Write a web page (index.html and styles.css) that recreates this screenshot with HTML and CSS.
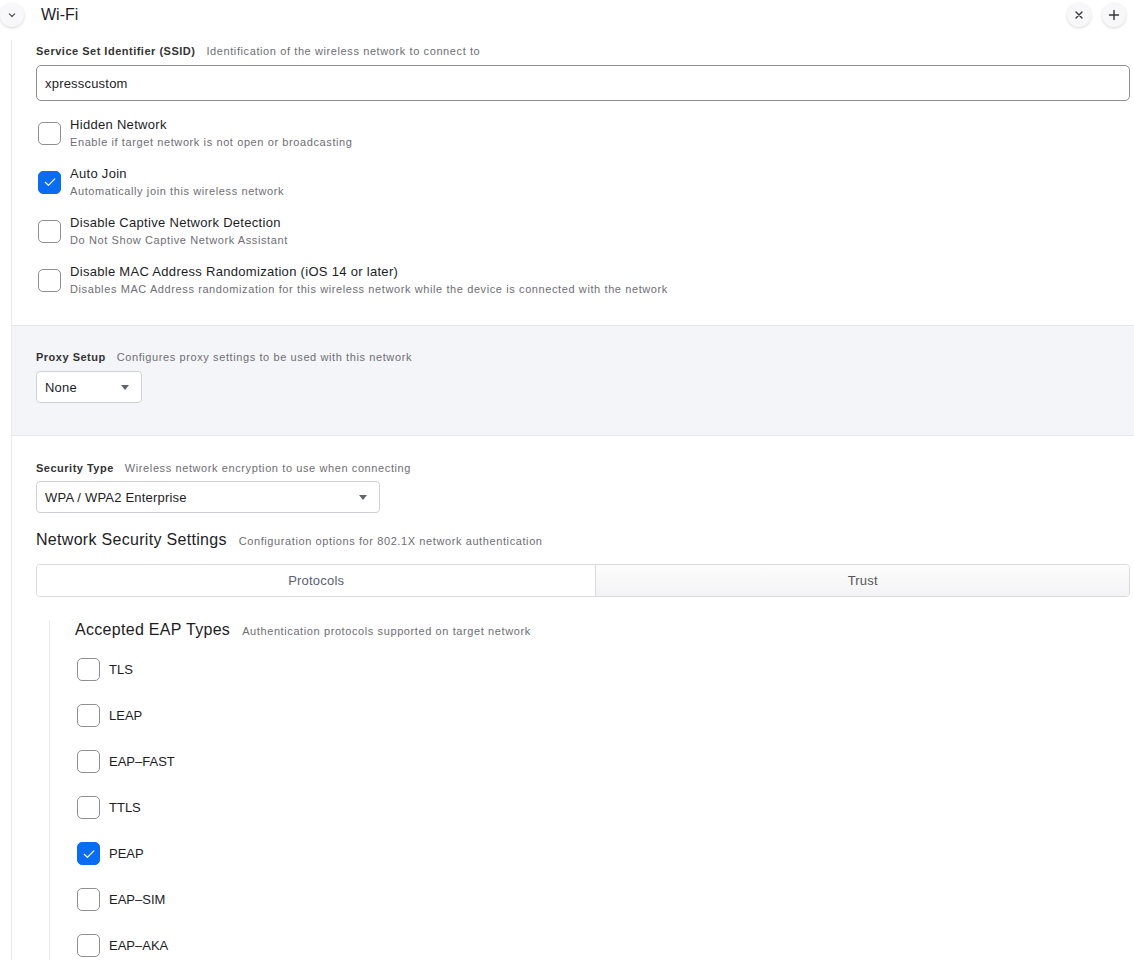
FILE: index.html
```html
<!DOCTYPE html>
<html lang="en">
  <head>
    <meta charset="UTF-8" />
    <title>Wi-Fi</title>
    <link rel="stylesheet" href="styles.css">
  </head>
  <body>
    <header class="payload-head">
      <button class="round-btn collapse" aria-label="Collapse">
        <svg width="10" height="10" viewBox="0 0 10 10"><path d="M2.3 3.8 L5 6.5 L7.7 3.8" fill="none" stroke="#555" stroke-width="1.2" stroke-linecap="round" stroke-linejoin="round"/></svg>
      </button>
      <div class="payload-title">Wi-Fi</div>
      <div class="head-actions">
        <button class="round-btn" aria-label="Remove">
          <svg width="10" height="10" viewBox="0 0 10 10"><path d="M2 2 L8 8 M8 2 L2 8" fill="none" stroke="#333" stroke-width="1.4" stroke-linecap="round"/></svg>
        </button>
        <button class="round-btn" aria-label="Add">
          <svg width="12" height="12" viewBox="0 0 12 12"><path d="M6 1.5 V10.5 M1.5 6 H10.5" fill="none" stroke="#333" stroke-width="1.4" stroke-linecap="round"/></svg>
        </button>
      </div>
    </header>

    <div class="panel">
      <section class="section">
        <div class="field-label"><strong>Service Set Identifier (SSID)</strong><span>Identification of the wireless network to connect to</span></div>
        <div class="text-input">xpresscustom</div>

        <div class="check-list">
          <div class="check-row">
            <span class="box"></span>
            <div>
              <div class="check-title">Hidden Network</div>
              <div class="check-desc">Enable if target network is not open or broadcasting</div>
            </div>
          </div>
          <div class="check-row">
            <span class="box checked"><svg width="14" height="14" viewBox="0 0 14 14"><path d="M2.2 7.3 L5.4 10.3 L11.8 3.9" fill="none" stroke="#fff" stroke-width="1.2" stroke-linecap="round" stroke-linejoin="round"/></svg></span>
            <div>
              <div class="check-title">Auto Join</div>
              <div class="check-desc">Automatically join this wireless network</div>
            </div>
          </div>
          <div class="check-row">
            <span class="box"></span>
            <div>
              <div class="check-title">Disable Captive Network Detection</div>
              <div class="check-desc">Do Not Show Captive Network Assistant</div>
            </div>
          </div>
          <div class="check-row">
            <span class="box"></span>
            <div>
              <div class="check-title">Disable MAC Address Randomization (iOS 14 or later)</div>
              <div class="check-desc">Disables MAC Address randomization for this wireless network while the device is connected with the network</div>
            </div>
          </div>
        </div>
      </section>

      <section class="section shaded">
        <div class="field-label"><strong>Proxy Setup</strong><span>Configures proxy settings to be used with this network</span></div>
        <div class="select proxy-select">None<i class="caret"></i></div>
      </section>

      <section class="section">
        <div class="field-label"><strong>Security Type</strong><span>Wireless network encryption to use when connecting</span></div>
        <div class="select security-select">WPA / WPA2 Enterprise<i class="caret"></i></div>

        <div class="group-title">Network Security Settings<span>Configuration options for 802.1X network authentication</span></div>

        <div class="tabs">
          <div class="tab active">Protocols</div>
          <div class="tab">Trust</div>
        </div>

        <div class="sub-block">
          <div class="group-title first">Accepted EAP Types<span>Authentication protocols supported on target network</span></div>
          <div class="eap-list">
            <div class="eap-row"><span class="box"></span>TLS</div>
            <div class="eap-row"><span class="box"></span>LEAP</div>
            <div class="eap-row"><span class="box"></span>EAP–FAST</div>
            <div class="eap-row"><span class="box"></span>TTLS</div>
            <div class="eap-row"><span class="box checked"><svg width="14" height="14" viewBox="0 0 14 14"><path d="M2.2 7.3 L5.4 10.3 L11.8 3.9" fill="none" stroke="#fff" stroke-width="1.2" stroke-linecap="round" stroke-linejoin="round"/></svg></span>PEAP</div>
            <div class="eap-row"><span class="box"></span>EAP–SIM</div>
            <div class="eap-row"><span class="box"></span>EAP–AKA</div>
          </div>
        </div>
      </section>
    </div>
  </body>
</html>
```

FILE: styles.css
```css
body {
  margin: 0;
  padding: 0;
  font-family: "Liberation Sans", Arial, sans-serif;
  color: #1d1d1f;
  background: #fff;
}
.payload-head {
  display: flex;
  align-items: center;
  height: 30px;
  padding: 0 8px 0 0;
}
.round-btn {
  width: 24px;
  height: 24px;
  padding: 0;
  border: none;
  border-radius: 50%;
  background: #f8f8fa;
  box-shadow: 0 1px 3px rgba(0,0,0,0.16);
  display: flex;
  align-items: center;
  justify-content: center;
  cursor: pointer;
}
.payload-title {
  margin-left: 17px;
  font-size: 16px;
  flex: 1;
}
.head-actions {
  display: flex;
  gap: 11px;
}
.panel {
  margin: 10px 0 0 11px;
  border-left: 1px solid #ebebed;
}
.section {
  padding: 4px 4px 29px 24px;
}
.section.shaded {
  background: #f4f5f8;
  border-top: 1px solid #e4e6ea;
  border-bottom: 1px solid #e4e6ea;
  padding: 24px 4px 32px 24px;
}
.section.shaded + .section {
  padding-top: 25px;
}
.field-label {
  display: flex;
  align-items: baseline;
  gap: 11px;
  font-size: 11px;
  line-height: 14px;
  letter-spacing: 0.6px;
}
.field-label strong {
  color: #333;
  letter-spacing: 0.5px;
}
.field-label span,
.check-desc,
.group-title span {
  color: #6e6e73;
}
.text-input {
  margin-top: 7px;
  height: 36px;
  box-sizing: border-box;
  border: 1px solid #8e8e93;
  border-radius: 5px;
  padding: 0 8px;
  display: flex;
  align-items: center;
  font-size: 13px;
  letter-spacing: 0.2px;
  background: #fff;
}
.check-list {
  margin-top: 16px;
  display: flex;
  flex-direction: column;
  gap: 17px;
}
.check-row {
  display: flex;
  align-items: center;
  gap: 9px;
  padding-left: 2px;
}
.check-title {
  font-size: 13px;
  line-height: 16px;
  letter-spacing: 0.3px;
}
.check-desc {
  margin-top: 2px;
  font-size: 11px;
  line-height: 14px;
  letter-spacing: 0.6px;
}
.box {
  width: 23px;
  height: 23px;
  box-sizing: border-box;
  border: 1px solid #8e8e93;
  border-radius: 5px;
  background: #fff;
  flex-shrink: 0;
  display: flex;
  align-items: center;
  justify-content: center;
}
.box.checked {
  background: #0a6cf0;
  border-color: #0a6cf0;
}
.select {
  margin-top: 6px;
  height: 32px;
  box-sizing: border-box;
  border: 1px solid #cfd1d6;
  border-radius: 4px;
  background: #fff;
  padding: 0 12px 0 8px;
  display: flex;
  align-items: center;
  justify-content: space-between;
  font-size: 13px;
  letter-spacing: 0.2px;
}
.shaded .select {
  margin-top: 7px;
}
.proxy-select {
  width: 106px;
}
.security-select {
  width: 344px;
}
.caret {
  width: 0;
  height: 0;
  border-left: 4px solid transparent;
  border-right: 4px solid transparent;
  border-top: 5px solid #5f6470;
}
.group-title {
  margin-top: 17px;
  display: flex;
  align-items: baseline;
  gap: 12px;
  font-size: 16px;
  line-height: 20px;
  letter-spacing: 0.3px;
}
.group-title span {
  font-size: 11px;
  letter-spacing: 0.6px;
}
.group-title.first {
  margin-top: 0;
}
.tabs {
  margin-top: 13px;
  display: flex;
  height: 33px;
  box-sizing: border-box;
  border: 1px solid #d9dadd;
  border-radius: 4px;
  overflow: hidden;
}
.tab {
  flex: 1 1 auto;
  display: flex;
  align-items: center;
  justify-content: center;
  font-size: 13px;
  letter-spacing: 0.2px;
  color: #555;
  background: linear-gradient(#fdfdfd, #f3f3f5);
}
.tab + .tab {
  border-left: 1px solid #d9dadd;
}
.tab.active {
  background: #fff;
  color: #5a6172;
}
.sub-block {
  margin: 23px 0 0 13px;
  padding: 0 0 20px 25px;
  border-left: 1px solid #ececee;
}
.eap-list {
  margin-top: 17px;
  display: flex;
  flex-direction: column;
  gap: 23px;
}
.eap-row {
  display: flex;
  align-items: center;
  gap: 9px;
  padding-left: 2px;
  font-size: 13px;
}
```
